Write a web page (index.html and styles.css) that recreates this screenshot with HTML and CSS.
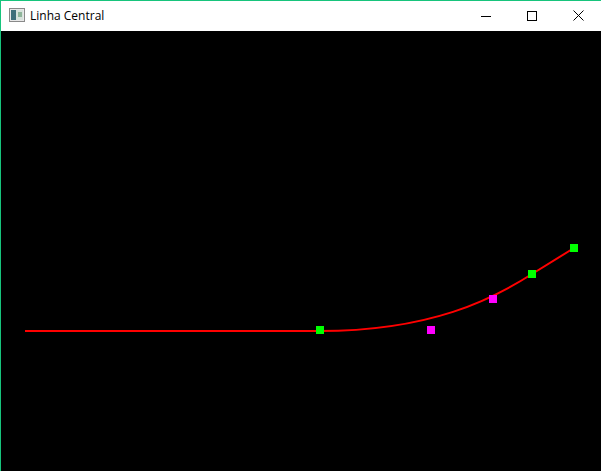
FILE: index.html
```html
<!DOCTYPE html>
<html>
<head>
<meta charset="utf-8">
<link rel="stylesheet" href="styles.css">
</head>
<body>
<div class="window">
  <div class="titlebar">
    <svg class="app-icon" width="16" height="14" viewBox="0 0 16 14">
      <rect x="0.5" y="0.5" width="15" height="13" fill="#e8e8e8" stroke="#8a8a8a"/>
      <rect x="2" y="2" width="5" height="10" fill="#3f6f7a"/>
      <rect x="7" y="2" width="7" height="10" fill="#d7e2dc"/>
      <rect x="9" y="4" width="4" height="5" fill="#8fb59a"/>
    </svg>
    <span class="title">Linha Central</span>
    <div class="controls">
      <div class="ctl">
        <svg width="10" height="10" viewBox="0 0 10 10"><line x1="0" y1="5.5" x2="10" y2="5.5" stroke="#000" stroke-width="1"/></svg>
      </div>
      <div class="ctl">
        <svg width="10" height="10" viewBox="0 0 10 10"><rect x="0.5" y="0.5" width="9" height="9" fill="none" stroke="#000" stroke-width="1"/></svg>
      </div>
      <div class="ctl">
        <svg width="11" height="11" viewBox="0 0 11 11"><path d="M0.5 0.5 L10.5 10.5 M10.5 0.5 L0.5 10.5" stroke="#000" stroke-width="1"/></svg>
      </div>
    </div>
  </div>
  <div class="canvas">
    <svg width="600" height="440" viewBox="1 31 600 440">
      <path d="M25 331 L320 331 C431 331 493 299 532 274 L574 248" fill="none" stroke="#ff0000" stroke-width="2"/>
      <rect x="316" y="326" width="8" height="8" fill="#00ff00"/>
      <rect x="427" y="326" width="8" height="8" fill="#ff00ff"/>
      <rect x="489" y="295" width="8" height="8" fill="#ff00ff"/>
      <rect x="528" y="270" width="8" height="8" fill="#00ff00"/>
      <rect x="570" y="244" width="8" height="8" fill="#00ff00"/>
    </svg>
  </div>
</div>
</body>
</html>
```
FILE: styles.css
```css
html, body {
  margin: 0;
  padding: 0;
  background: #000;
  overflow: hidden;
}
.window {
  width: 600px;
  height: 470px;
  border-left: 1px solid #17c47c;
  border-top: 1px solid #17c47c;
  display: flex;
  flex-direction: column;
}
.titlebar {
  height: 30px;
  background: #fff;
  display: flex;
  align-items: center;
  font-family: "Open Sans", "Noto Sans", sans-serif;
  font-size: 12px;
  color: #000;
}
.app-icon {
  margin-left: 8px;
  margin-top: -2px;
}
.title {
  margin-left: 5px;
  margin-top: -1px;
}
.controls {
  margin-left: auto;
  display: flex;
  height: 30px;
}
.ctl {
  width: 46px;
  height: 30px;
  display: flex;
  align-items: center;
  justify-content: center;
}
.ctl svg {
  display: block;
  margin-top: -1px;
}
.canvas {
  flex: 1;
  background: #000;
}
.canvas svg {
  display: block;
}
```
